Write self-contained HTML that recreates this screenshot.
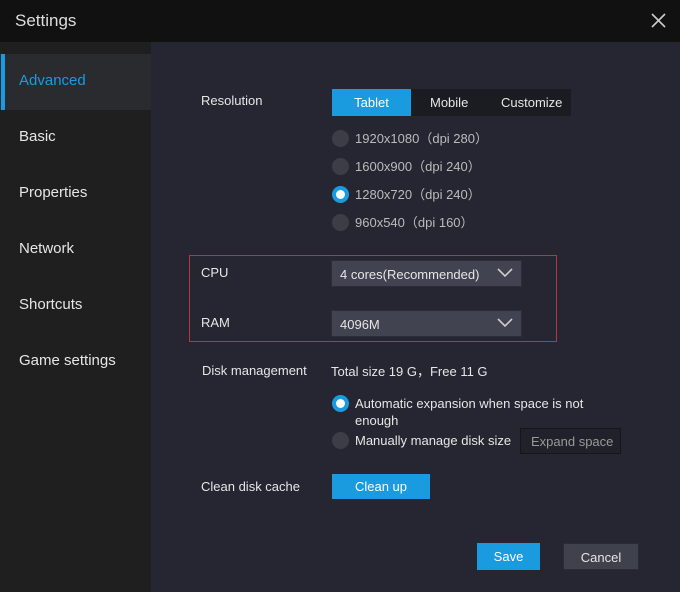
<html><head><style>
body{margin:0;width:680px;height:592px;background:#252631;font-family:"Liberation Sans",sans-serif;font-size:13px;color:#e6e6e6;position:relative;overflow:hidden}
div{position:absolute;box-sizing:border-box}
.t{white-space:nowrap}
.r{width:17px;height:17px;border-radius:50%;background:#3c3d47}
.rs{width:17px;height:17px;border-radius:50%;background:#1a9be0;border:4px solid #1a9be0}
.rs::after{content:"";position:absolute;left:0;top:0;width:9px;height:9px;border-radius:50%;background:#fff}
.sel{background:#414350;border:1px solid #2c2d36;height:27px;width:191px;padding:6px 8px}
.chev{position:absolute;right:8px;top:7px}
.btn{background:#1a9be0;color:#fff;text-align:center;padding-top:5px}
</style></head><body>
<div style="left:0;top:0;width:680px;height:42px;background:#111112"></div>
<div class="t" style="left:15px;top:11px;font-size:17px;color:#ddd">Settings</div>
<svg style="position:absolute;left:651px;top:13px" width="15" height="15" viewBox="0 0 15 15"><path d="M1 1L14 14M14 1L1 14" stroke="#ccc" stroke-width="1.6"/></svg>
<div style="left:0;top:42px;width:151px;height:550px;background:#1f1f20"></div>
<div style="left:0;top:54px;width:151px;height:56px;background:#2a2b2f"></div>
<div style="left:1px;top:54px;width:4px;height:56px;background:#1a9be0"></div>
<div class="t" style="left:19px;top:72px;font-size:15px;color:#1a9be0">Advanced</div>
<div class="t" style="left:19px;top:128px;font-size:15px">Basic</div>
<div class="t" style="left:19px;top:184px;font-size:15px">Properties</div>
<div class="t" style="left:19px;top:240px;font-size:15px">Network</div>
<div class="t" style="left:19px;top:296px;font-size:15px">Shortcuts</div>
<div class="t" style="left:19px;top:352px;font-size:15px">Game settings</div>

<div class="t" style="left:201px;top:93px">Resolution</div>
<div style="left:332px;top:89px;width:239px;height:27px;background:#1b1c22"></div>
<div class="btn" style="left:332px;top:89px;width:79px;height:27px;padding-top:6px">Tablet</div>
<div class="t" style="left:430px;top:95px">Mobile</div>
<div class="t" style="left:501px;top:95px">Customize</div>
<div class="r" style="left:332px;top:130px"></div><div class="t" style="left:355px;top:131px;color:#bbb;line-height:15px">1920x1080（dpi 280）</div>
<div class="r" style="left:332px;top:158px"></div><div class="t" style="left:355px;top:159px;color:#bbb;line-height:15px">1600x900（dpi 240）</div>
<div class="rs" style="left:332px;top:186px"></div><div class="t" style="left:355px;top:187px;color:#bbb;line-height:15px">1280x720（dpi 240）</div>
<div class="r" style="left:332px;top:214px"></div><div class="t" style="left:355px;top:215px;color:#bbb;line-height:15px">960x540（dpi 160）</div>

<div style="left:189px;top:255px;width:368px;height:87px;border:1px solid #b0383f"></div>
<div class="t" style="left:201px;top:265px">CPU</div>
<div class="sel" style="left:331px;top:260px">4 cores(Recommended)<svg class="chev" width="16" height="10" viewBox="0 0 16 10"><path d="M1 1l7 7 7-7" stroke="#ccc" stroke-width="1.6" fill="none"/></svg></div>
<div class="t" style="left:201px;top:315px">RAM</div>
<div class="sel" style="left:331px;top:310px">4096M<svg class="chev" width="16" height="10" viewBox="0 0 16 10"><path d="M1 1l7 7 7-7" stroke="#ccc" stroke-width="1.6" fill="none"/></svg></div>

<div class="t" style="left:202px;top:363px">Disk management</div>
<div class="t" style="left:331px;top:364px;line-height:15px">Total size 19 G，Free 11 G</div>
<div class="rs" style="left:332px;top:395px"></div>
<div class="t" style="left:355px;top:395px;line-height:17px">Automatic expansion when space is not<br>enough</div>
<div class="r" style="left:332px;top:432px"></div>
<div class="t" style="left:355px;top:433px">Manually manage disk size</div>
<div style="left:520px;top:428px;width:101px;height:26px;background:#20212a;border:1px solid #15161b;color:#999;padding:5px 0 0 10px" class="t">Expand space</div>

<div class="t" style="left:201px;top:479px">Clean disk cache</div>
<div class="btn" style="left:332px;top:474px;width:98px;height:25px">Clean up</div>
<div class="btn" style="left:477px;top:543px;width:63px;height:27px;padding-top:6px">Save</div>
<div style="left:563px;top:543px;width:76px;height:27px;background:#3f414d;border:1px solid #2a2b33;text-align:center;padding-top:6px">Cancel</div>
</body></html>
